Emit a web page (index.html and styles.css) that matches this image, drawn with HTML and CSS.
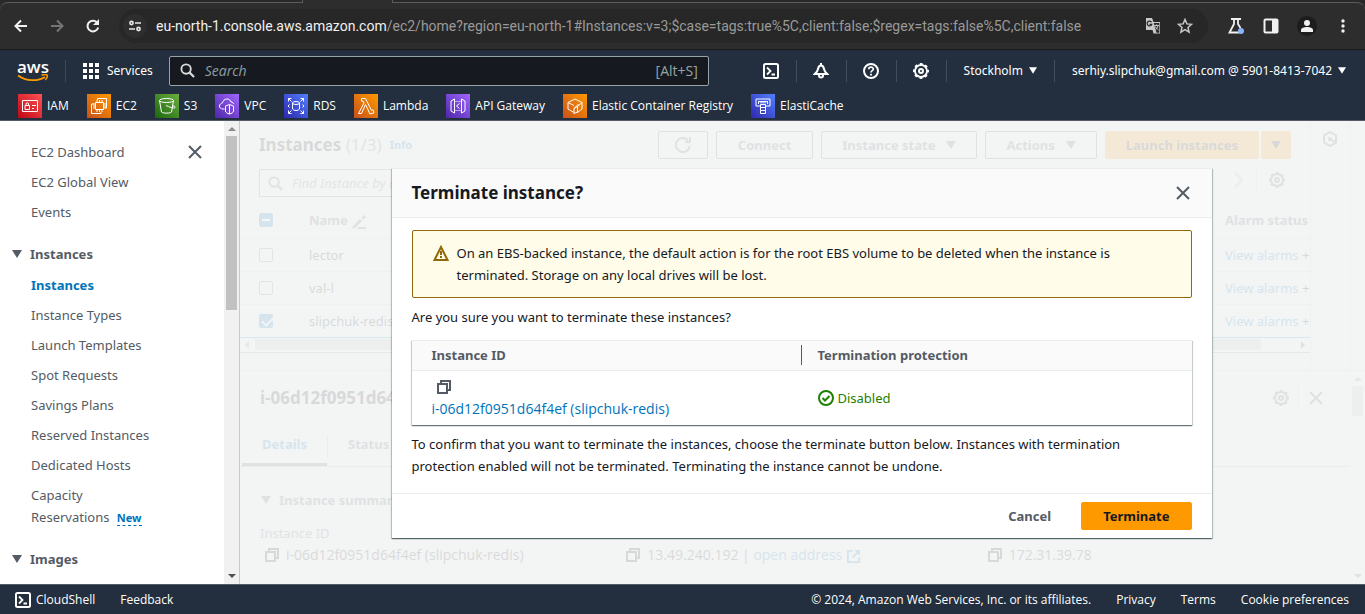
FILE: index.html
```html
<!DOCTYPE html>
<html lang="en">
<head>
<meta charset="utf-8">
<title>Instances | EC2 | eu-north-1</title>
<link rel="stylesheet" href="styles.css">
</head>
<body>
<svg class="sprite" aria-hidden="true">
  <symbol id="close" viewBox="0 0 16 16"><path d="M2 2l12 12M14 2L2 14" fill="none" stroke="currentColor" stroke-width="2"/></symbol>
  <symbol id="caret" viewBox="0 0 10 8"><path d="M0 0h10L5 8z" fill="currentColor"/></symbol>
  <symbol id="copy" viewBox="0 0 16 16"><path d="M2 5h9v9H2zM5 5V2h9v9h-3" fill="none" stroke="currentColor" stroke-width="2"/></symbol>
  <symbol id="search" viewBox="0 0 16 16"><circle cx="6.500" cy="6.500" r="5" fill="none" stroke="currentColor" stroke-width="2"/><path d="M10 10l5 5" stroke="currentColor" stroke-width="2.300"/></symbol>
  <symbol id="gear" viewBox="0 0 16 16"><circle cx="8" cy="8" r="7" fill="none" stroke="currentColor" stroke-width="2" stroke-dasharray="2.750 2.748" stroke-dashoffset="1.375"/><circle cx="8" cy="8" r="6" fill="none" stroke="currentColor" stroke-width="1.800"/><circle cx="8" cy="8" r="2" fill="none" stroke="currentColor" stroke-width="2"/></symbol>
  <symbol id="shell" viewBox="0 0 16 16"><rect x="1" y="1" width="14" height="14" rx="1.500" fill="none" stroke="currentColor" stroke-width="2"/><path d="M4 4.500L7.500 8 4 11.500M8.500 11.500H12" fill="none" stroke="currentColor" stroke-width="1.800"/></symbol>
  <symbol id="refresh" viewBox="0 0 16 16"><path d="M14.800 9A7 7 0 1 1 13 3.200" fill="none" stroke="currentColor" stroke-width="2"/><path d="M15 0v5h-5" fill="none" stroke="currentColor" stroke-width="2"/></symbol>
</svg>

<header class="browser">
  <div class="toolbar">
    <span class="tab-gap"></span>
    <button class="tool" aria-label="Back"><svg width="14" height="14" viewBox="0 0 14 14"><path d="M13 7H2M7 1.500L1.500 7 7 12.500" fill="none" stroke="currentColor" stroke-width="2"/></svg></button>
    <button class="tool tool-off" aria-label="Forward"><svg width="14" height="14" viewBox="0 0 14 14"><path d="M1 7h11M7 1.500L12.500 7 7 12.500" fill="none" stroke="currentColor" stroke-width="2"/></svg></button>
    <button class="tool" aria-label="Reload"><svg width="14" height="14" viewBox="0 0 14 14"><path d="M12.200 8.500A5.400 5.400 0 1 1 10.800 3.200L12 4.500" fill="none" stroke="currentColor" stroke-width="2"/><path d="M13 0v6H7z" fill="currentColor"/></svg></button>
    <div class="omnibox">
      <button class="site-info" aria-label="Site information"><svg width="12" height="12" viewBox="0 0 12 12"><g fill="none" stroke="currentColor" stroke-width="1.600"><circle cx="2.500" cy="3" r="1.600"/><path d="M6 3h6M0 9h6"/><circle cx="9.500" cy="9" r="1.600"/></g></svg></button>
      <p class="url"><span>eu-north-1.console.aws.amazon.com</span>/ec2/home?region=eu-north-1#Instances:v=3;$case=tags:true%5C,client:false;$regex=tags:false%5C,client:false</p>
      <button class="page-action" aria-label="Translate"><svg width="16" height="16" viewBox="0 0 16 16"><path d="M1 0h6l1.500 4h6.500v11.500H8.500L7.500 12H1z" fill="currentColor"/><path d="M8.800 5l2.700 9.800H14.300V5z" fill="#272727"/><path d="M6.600 4.200A2.400 2.400 0 1 0 6.800 6.300H4.500" fill="none" stroke="#272727" stroke-width="1.200"/><path d="M9.500 7.500h4.500M11.700 6.300v1.200M13 7.500c-.4 2-1.500 3.500-2.500 4.300M10.500 8.500c.5 1.300 1.700 2.700 3 3.500" fill="none" stroke="currentColor"/></svg></button>
      <button class="page-action" aria-label="Bookmark"><svg width="16" height="16" viewBox="0 0 16 16"><path d="M8 1.500l1.900 4.400 4.700.4-3.600 3.200 1.100 4.700L8 11.700l-4.100 2.500L5 9.500 1.400 6.300l4.700-.4z" fill="none" stroke="currentColor" stroke-width="1.500"/></svg></button>
    </div>
    <div class="extensions">
      <button class="tool" aria-label="Labs"><svg width="18" height="18" viewBox="0 0 18 18"><path d="M4 2h10M7 2v5L2.500 15.500h10M11 2v5l2.500 4" fill="none" stroke="currentColor" stroke-width="1.800"/><circle cx="14" cy="14" r="3" fill="#8ab4f8"/></svg></button>
      <button class="tool" aria-label="Side panel"><svg width="16" height="16" viewBox="0 0 16 16"><rect x="1.500" y="1.500" width="13" height="13" rx="1" fill="none" stroke="currentColor" stroke-width="2"/><path d="M9 1h6v14H9z" fill="currentColor"/></svg></button>
      <button class="tool" aria-label="Profile"><svg width="20" height="20" viewBox="0 0 20 20"><circle cx="10" cy="10" r="10" fill="#1d1d1d"/><circle cx="10" cy="7" r="3" fill="currentColor"/><path d="M4 16v-2c0-2 3-3 6-3s6 1 6 3v2z" fill="currentColor"/></svg></button>
      <button class="tool tool-menu" aria-label="Menu"><svg width="4" height="16" viewBox="0 0 4 16"><g fill="currentColor"><circle cx="2" cy="3" r="1.700"/><circle cx="2" cy="8" r="1.700"/><circle cx="2" cy="13" r="1.700"/></g></svg></button>
    </div>
  </div>
</header>

<nav class="console-nav" aria-label="Console">
  <div class="nav-main">
    <a class="logo" href="#"><span>aws</span><svg width="32" height="8" viewBox="0 0 32 8"><path d="M1 1.500C9 7.500 21 7.500 28 3" fill="none" stroke="#f90" stroke-width="1.700"/><path d="M24.500 1.200c2.500-.8 5-.8 5.700 0 .4 1-.4 3.200-1.800 4.800" fill="none" stroke="#f90" stroke-width="1.500"/></svg></a>
    <button class="services"><svg width="16" height="16" viewBox="0 0 16 16"><path d="M0 0h4v4H0zM6 0h4v4H6zM12 0h4v4h-4zM0 6h4v4H0zM6 6h4v4H6zM12 6h4v4h-4zM0 12h4v4H0zM6 12h4v4H6zM12 12h4v4h-4z" fill="currentColor"/></svg>Services</button>
    <label class="nav-search"><svg width="15" height="15"><use href="#search"/></svg><input type="text" placeholder="Search" aria-label="Search"><span>[Alt+S]</span></label>
    <div class="nav-tools">
      <button aria-label="CloudShell"><svg width="16" height="16"><use href="#shell"/></svg></button>
      <button aria-label="Notifications"><svg width="16" height="16" viewBox="0 0 16 16"><path d="M8 0v2.500M8 2.500C6 2.500 5.300 4 5 6c-.3 2.200-1.500 3.500-3.200 5h12.400C12.500 9.500 11.300 8.200 11 6c-.3-2-1-3.500-3-3.500zM6 11.500v1a2 2 0 0 0 4 0v-1" fill="none" stroke="currentColor" stroke-width="2"/></svg></button>
      <button aria-label="Help"><svg width="16" height="16" viewBox="0 0 16 16"><circle cx="8" cy="8" r="7" fill="none" stroke="currentColor" stroke-width="2"/><path d="M5.700 6.300C5.700 3.400 10.300 3.500 10.300 6c0 1.700-2.300 1.500-2.300 3.500" fill="none" stroke="currentColor" stroke-width="1.700"/><path d="M7.100 10.700h1.800v1.800H7.100z" fill="currentColor"/></svg></button>
      <button aria-label="Settings"><svg width="16" height="16"><use href="#gear"/></svg></button>
      <button class="region">Stockholm<svg width="8" height="7"><use href="#caret"/></svg></button>
      <button class="account">serhiy.slipchuk@gmail.com @ 5901-8413-7042<svg width="8" height="7"><use href="#caret"/></svg></button>
    </div>
  </div>
  <div class="favorites">
    <a href="#"><svg class="red" viewBox="0 0 24 24"><path d="M4.500 6.500h15v11h-15zM7 11.500h4.500v4H7zM8 11.500V10a1.200 1.200 0 0 1 2.500 0v1.500M14 11.500h4M14 14.500h2"/></svg>IAM</a>
    <a href="#"><svg class="orange" viewBox="0 0 24 24"><path d="M8.500 8.500h8v7h-8zM10 8V6M12.500 8V6M15 8V6M10 18v-2M12.500 18v-2M15 18v-2M8 10H6M8 12H6M8 14H6M19 10h-2M19 12h-2M19 14h-2M10.500 6V4.500h9V14H18M7 10H4.500v9.500H14V18"/></svg>EC2</a>
    <a href="#"><svg class="green" viewBox="0 0 24 24"><ellipse cx="11.500" cy="6.500" rx="7" ry="2"/><path d="M4.500 6.500L6.500 18c1 1.500 9 1.500 10 0l2-11.500M11 11.500c3 1.500 8 3.200 9 2.200s-1-1.700-3-2.200"/></svg>S3</a>
    <a href="#"><svg class="purple" viewBox="0 0 24 24"><path d="M9.500 15H8c-2.500 0-3.500-1.500-3.500-3S6 9 7.500 9C8 6.500 9.500 5 12 5s3.500 1.500 4 3c1.500 0 2.500 1 2.500 2M14.500 10.500l4 1.500v5c0 1.500-2 2.500-4 3-2-.500-4-1.500-4-3v-5zM14.500 11v9"/></svg>VPC</a>
    <a href="#"><svg class="blue" viewBox="0 0 24 24"><ellipse cx="12" cy="9" rx="3.500" ry="1.500"/><path d="M8.500 9v6c1 2 6 2 7 0V9M4.500 7.500v-3h3M4.500 4.500l3 3M16.500 4.500h3v3M19.500 4.500l-3 3M4.500 16.500v3h3M4.500 19.500l3-3M16.500 19.500h3v-3M19.500 19.500l-3-3M5.500 10.500L4 12l1.500 1.500M18.500 10.500L20 12l-1.500 1.500"/></svg>RDS</a>
    <a href="#"><svg class="orange" viewBox="0 0 24 24"><path d="M7.500 4.500h4l6 12 1.500-.700 1 3-4 1.200-4.500-9.500L7.500 19.500h-3L10 9 9 7H7.500z"/></svg>Lambda</a>
    <a href="#"><svg class="purple" viewBox="0 0 24 24"><path d="M8.500 5v14L5 17V7zM15.500 5v14l3.500-2V7zM13.500 9.500L10.500 12l3 2.500"/><path d="M8.500 7.500h7M8.500 16.500h7" stroke-dasharray="1 1"/></svg>API Gateway</a>
    <a href="#"><svg class="orange" viewBox="0 0 24 24"><path d="M11 18.500l-6-3.500V8.500L12 5l7 3.500v6.500l-4.500 3.500v-6l4.500-4M5 8.500l6 3M14.500 12.500l-3.500 2v5l3.500-1.500M11 14.500l4.500-4.500"/></svg>Elastic Container Registry</a>
    <a href="#"><svg class="blue" viewBox="0 0 24 24"><path d="M9 12H5V5h14v7h-4M7.500 10V7.500h9V10M10 7.500v2M12 7.500v2M14 7.500v2M9.500 10.500h5v3h-5zM9.500 13.500h5v3h-5zM9.500 16.500h5v3h-5z"/></svg>ElastiCache</a>
  </div>
</nav>

<div class="workspace">
  <aside class="sidebar">
    <nav class="side-nav" aria-label="EC2">
      <button class="side-close" aria-label="Close navigation"><svg width="16" height="16"><use href="#close"/></svg></button>
      <ul>
        <li><a href="#">EC2 Dashboard</a></li>
        <li><a href="#">EC2 Global View</a></li>
        <li><a href="#">Events</a></li>
      </ul>
      <h2><svg width="10" height="8"><use href="#caret"/></svg>Instances</h2>
      <ul>
        <li><a class="current" href="#">Instances</a></li>
        <li><a href="#">Instance Types</a></li>
        <li><a href="#">Launch Templates</a></li>
        <li><a href="#">Spot Requests</a></li>
        <li><a href="#">Savings Plans</a></li>
        <li><a href="#">Reserved Instances</a></li>
        <li><a href="#">Dedicated Hosts</a></li>
        <li><a href="#">Capacity<br>Reservations</a> <a class="new" href="#">New</a></li>
      </ul>
      <h2><svg width="10" height="8"><use href="#caret"/></svg>Images</h2>
    </nav>
    <div class="scrollbar"><i class="up"></i><i class="thumb"></i><i class="down"></i></div>
  </aside>

  <main class="stage">
    <div class="page">
      <section class="instances">
        <div class="page-head">
          <h1>Instances <span>(1/3)</span></h1><a class="info" href="#">Info</a>
          <div class="actions">
            <button class="btn btn-icon" aria-label="Refresh"><svg width="16" height="16"><use href="#refresh"/></svg></button>
            <button class="btn btn-wide">Connect</button>
            <button class="btn">Instance state<svg width="10" height="8"><use href="#caret"/></svg></button>
            <button class="btn">Actions<svg width="10" height="8"><use href="#caret"/></svg></button>
            <div class="split"><button class="btn primary">Launch instances</button><button class="btn primary btn-caret" aria-label="More launch options"><svg width="10" height="8"><use href="#caret"/></svg></button></div>
          </div>
        </div>
        <div class="filter">
          <label class="find"><svg width="15" height="15"><use href="#search"/></svg><input type="text" placeholder="Find Instance by attribute or tag" aria-label="Find instance"></label>
          <div class="pager">
            <svg width="10" height="16" viewBox="0 0 10 16"><path d="M1 1l7 7-7 7" fill="none" stroke="#aab7b8" stroke-width="2"/></svg>
            <i></i>
            <svg width="16" height="16"><use href="#gear"/></svg>
          </div>
        </div>
        <table class="list">
          <thead><tr><th class="pick"><input type="checkbox" class="mixed" aria-label="Select all"></th><th>Name <svg width="16" height="16" viewBox="0 0 16 16"><path d="M1 15l1.500-3.500L9 5l2 2-6.500 6.500zM10.500 3.500L13 1l2 2-2.500 2.500z" fill="currentColor"/><path d="M7 14h8" stroke="currentColor" stroke-width="2"/></svg></th><th class="alarm">Alarm status</th></tr></thead>
          <tbody>
            <tr><td class="pick"><input type="checkbox" aria-label="lector"></td><td>lector</td><td class="alarm"><a href="#">View alarms</a> +</td></tr>
            <tr><td class="pick"><input type="checkbox" aria-label="val-l"></td><td>val-l</td><td class="alarm"><a href="#">View alarms</a> +</td></tr>
            <tr class="picked"><td class="pick"><input type="checkbox" checked aria-label="slipchuk-redis"></td><td>slipchuk-redis</td><td class="alarm"><a href="#">View alarms</a> +</td></tr>
          </tbody>
        </table>
        <div class="hscroll"><i class="left"></i><i class="track"></i><i class="right"></i></div>
      </section>
      <div class="tool-strip"><svg width="16" height="16" viewBox="0 0 16 16"><path d="M8 1l6 3.500v7L8 15l-6-3.500v-7z" fill="none" stroke="currentColor" stroke-width="2"/><circle cx="8" cy="8" r="2" fill="currentColor"/><path d="M8 8l5 3" stroke="currentColor" stroke-width="2"/></svg></div>
      <section class="panel">
        <div class="panel-body">
          <div class="panel-head"><h2>i-06d12f0951d64f4ef (slipchuk-redis)</h2>
            <div class="panel-tools"><svg width="16" height="16"><use href="#gear"/></svg><i></i><svg width="16" height="16"><use href="#close"/></svg></div>
          </div>
          <div class="tabs"><button class="on">Details</button><i></i><button>Status and alarms</button></div>
          <h3><svg width="10" height="8"><use href="#caret"/></svg>Instance summary</h3>
          <div class="facts">
            <div><p class="label">Instance ID</p><p class="value"><svg width="16" height="16"><use href="#copy"/></svg>i-06d12f0951d64f4ef (slipchuk-redis)</p></div>
            <div><p class="label">Public IPv4 address</p><p class="value"><svg width="16" height="16"><use href="#copy"/></svg><span>13.49.240.192 | <a href="#">open address <svg width="15" height="15" viewBox="0 0 16 16"><path d="M7 2H2v12h12V9M10 2h4v4M14 2L7 9" fill="none" stroke="currentColor" stroke-width="2"/></svg></a></span></p></div>
            <div><p class="label">Private IPv4 addresses</p><p class="value"><svg width="16" height="16"><use href="#copy"/></svg>172.31.39.78</p></div>
          </div>
        </div>
        <div class="scrollbar"><i class="up"></i><i class="thumb"></i><i class="down"></i></div>
      </section>
    </div>

    <div class="overlay">
      <div class="modal" role="dialog" aria-modal="true" aria-labelledby="modal-title">
        <div class="modal-head"><h2 id="modal-title">Terminate instance?</h2><button class="modal-close" aria-label="Close"><svg width="16" height="16"><use href="#close"/></svg></button></div>
        <div class="modal-body">
          <div class="alert"><svg width="16" height="16" viewBox="0 0 16 16"><path d="M8 2L1.500 15h13z" fill="none" stroke="currentColor" stroke-width="2"/><path d="M8 6v4M8 11v2" stroke="currentColor" stroke-width="2"/></svg><p>On an EBS-backed instance, the default action is for the root EBS volume to be deleted when the instance is terminated. Storage on any local drives will be lost.</p></div>
          <p>Are you sure you want to terminate these instances?</p>
          <table class="targets">
            <thead><tr><th><span>Instance ID</span></th><th>Termination protection</th></tr></thead>
            <tbody><tr><td><button class="copy" aria-label="Copy instance ID"><svg width="16" height="16"><use href="#copy"/></svg></button><a class="resource" href="#">i-06d12f0951d64f4ef (slipchuk-redis)</a></td><td><span class="status"><svg width="16" height="16" viewBox="0 0 16 16"><circle cx="8" cy="8" r="7" fill="none" stroke="currentColor" stroke-width="2"/><path d="M4.500 8L7 10.500l4.500-4.500" fill="none" stroke="currentColor" stroke-width="2"/></svg>Disabled</span></td></tr></tbody>
          </table>
          <p class="notice">To confirm that you want to terminate the instances, choose the terminate button below. Instances with termination protection enabled will not be terminated. Terminating the instance cannot be undone.</p>
        </div>
        <div class="modal-foot"><button class="btn btn-wide link">Cancel</button><button class="btn btn-wide primary">Terminate</button></div>
      </div>
    </div>
  </main>
</div>

<footer class="console-foot">
  <a href="#"><svg width="16" height="16"><use href="#shell"/></svg>CloudShell</a>
  <a href="#">Feedback</a>
  <p>© 2024, Amazon Web Services, Inc. or its affiliates.</p>
  <a href="#">Privacy</a>
  <a href="#">Terms</a>
  <a href="#">Cookie preferences</a>
</footer>
</body>
</html>
```

FILE: styles.css
```css
* { box-sizing: border-box; }
html, body { height: 100%; }
body {
  margin: 0;
  display: flex;
  flex-direction: column;
  min-height: 100vh;
  overflow: hidden;
  background: #fff;
  color: #16191f;
  font: 13px/22px "Noto Sans", "Open Sans", sans-serif;
}
h1, h2, h3, p, ul { margin: 0; padding: 0; }
h1, h2, h3, th { font-size: 13px; font-weight: 700; line-height: 22px; }
ul { list-style: none; }
button { font: inherit; color: inherit; background: none; border: 0; padding: 0; cursor: pointer; }
input { font: inherit; }
a { color: #0073bb; text-decoration: none; }
svg { flex: none; }
.sprite { position: absolute; width: 0; height: 0; }

/* Browser chrome */
.browser { padding-top: 2px; background: #292929; border-bottom: 1px solid #1a1a1a; }
.toolbar {
  position: relative;
  display: flex;
  align-items: center;
  height: 47px;
  padding: 0 20px 0 14px;
  background: #2d2d2d;
  border-top: 1px solid #5c5c5c;
  border-radius: 8px 8px 0 0;
}
.tab-gap {
  position: absolute;
  top: -3px;
  left: 302px;
  width: 91px;
  height: 3px;
  background: #2d2d2d;
  border: solid #5c5c5c;
  border-width: 0 1px;
}
.tool { display: flex; color: #f1f1f1; }
.toolbar > .tool { margin-right: 22px; }
.tool-off.tool { color: #757575; }
.omnibox {
  flex: 1;
  display: flex;
  align-items: center;
  height: 34px;
  min-width: 0;
  padding: 0 15px 0 4px;
  background: #272727;
  border-radius: 17px;
}
.toolbar > .omnibox { margin-left: -3px; }
.site-info { display: grid; place-items: center; width: 24px; height: 24px; margin-right: 9px; border-radius: 12px; background: #2e2e2e; color: #e8e8e8; }
.url { flex: 1; min-width: 0; overflow: hidden; white-space: nowrap; color: #9a9a9a; font: 14px/20px Roboto, sans-serif; }
.url span { color: #f1f1f1; }
.page-action { display: flex; margin-left: 16px; color: #c8c8c8; }
.extensions { display: flex; align-items: center; gap: 18px; margin-left: 19px; }
.tool-menu { margin-left: 6px; }

/* Console navigation */
.console-nav { background: #232f3e; color: #fff; border-bottom: 1px solid #545b64; font-size: 12px; }
.nav-main { display: flex; align-items: center; height: 41px; padding-right: 19px; }
.logo { display: flex; flex-direction: column; align-items: center; margin-left: 17px; color: #fff; font: 600 17px/15px "Open Sans", sans-serif; }
.services { display: flex; align-items: center; gap: 8px; margin-left: 16px; padding-left: 17px; border-left: 1px solid #3f4a55; height: 22px; }
.nav-search {
  flex: 0 1 540px;
  display: flex;
  align-items: center;
  gap: 10px;
  height: 30px;
  margin-left: 16px;
  padding: 0 10px;
  background: #161a20;
  border: 1px solid #95a5a6;
  border-radius: 2px;
  color: #d5dbdb;
}
.nav-search input { flex: 1; min-width: 0; padding: 0; border: 0; background: none; color: #fff; font: 14px "Open Sans", sans-serif; }
.nav-search input::placeholder { color: #8f9ea0; font-style: italic; opacity: 1; }
.nav-search span { color: #95a5a6; font: 14px "Open Sans", sans-serif; }
.nav-tools { display: flex; align-items: center; margin-left: auto; }
.nav-tools button { display: flex; align-items: center; height: 22px; padding: 0 17px 0 16px; gap: 6px; border-left: 1px solid #414d5c; white-space: nowrap; }
.nav-tools button:first-child { border-left: 0; }
.nav-tools .region { padding-left: 17px; }
.nav-tools .account { padding: 0 0 0 17px; }
.favorites { display: flex; align-items: center; gap: 18px; height: 29px; padding: 0 18px; font-family: "Open Sans", sans-serif; }
.favorites a { display: flex; align-items: center; gap: 5px; color: #fff; white-space: nowrap; }
.favorites svg { width: 24px; height: 24px; fill: none; stroke: #fff; stroke-width: 1; }
.red { background: linear-gradient(45deg, #bd0816, #ff5252); }
.orange { background: linear-gradient(45deg, #c8511b, #f90); }
.green { background: linear-gradient(45deg, #1b660f, #6cae3e); }
.purple { background: linear-gradient(45deg, #4d27a8, #a166ff); }
.blue { background: linear-gradient(45deg, #2e27ad, #527fff); }

/* Workspace */
.workspace { flex: 1; display: flex; min-height: 0; }
.sidebar { display: flex; width: 240px; flex: none; border-right: 1px solid #c6cacb; overflow: hidden; }
.side-nav { flex: 1; position: relative; padding: 20px 0 0 31px; color: #545b64; overflow: hidden; }
.side-close { position: absolute; top: 23px; right: 21px; display: flex; }
.side-nav li + li { margin-top: 8px; }
.side-nav a { color: #545b64; }
.side-nav h2 { display: flex; align-items: center; gap: 8px; margin: 20px 0 9px -19px; }
.side-nav a.current { color: #0073bb; font-weight: 700; }
.side-nav a.new { margin-left: 4px; color: #0073bb; font-size: 11px; font-weight: 700; line-height: 16px; border-bottom: 1px dashed #0073bb; }
.scrollbar { display: flex; flex-direction: column; align-items: center; width: 15px; flex: none; padding: 6px 0; background: #f1f1f1; }
.scrollbar i, .hscroll i { border: 4px solid transparent; }
.scrollbar .up { border-top: 0; border-bottom-color: #8a8a8a; }
.scrollbar .thumb { width: 11px; height: 174px; margin: 5px 0 auto; border: 0; background: #c1c1c1; }
.scrollbar .down { border-bottom: 0; border-top-color: #505050; }

.stage { position: relative; flex: 1; min-width: 0; overflow: hidden; background: #f2f3f3; }
.page { height: 100%; display: grid; grid-template: 249px 1fr / 1fr 41px 14px; }
.instances { min-width: 0; overflow: hidden; padding-top: 10px; }
.page-head { display: flex; align-items: center; padding: 0 19px; white-space: nowrap; }
.page-head h1 { font-size: 17px; line-height: 28px; }
.page-head h1 span { font-weight: 400; color: #687078; }
.info { margin-left: 8px; font-size: 11px; font-weight: 700; }
.actions { display: flex; gap: 8px; margin-left: auto; }
.btn { display: flex; align-items: center; justify-content: center; gap: 11px; height: 28px; padding: 0 20px; border: 1px solid #545b64; border-radius: 2px; color: #545b64; font-weight: 700; white-space: nowrap; }
.btn-wide { padding: 0 21px; }
.btn-icon { width: 50px; }
.split { display: flex; gap: 2px; }
.btn.primary { background: #f90; border-color: #f90; color: #16191f; }
.btn-caret.btn { width: 30px; padding: 0; }
.btn.link { border-color: transparent; }
.filter { display: flex; align-items: flex-start; margin: 10px 0 6px; padding: 0 25px 0 19px; }
.find { display: flex; align-items: center; gap: 9px; width: 540px; height: 28px; padding: 0 8px; border: 1px solid #687078; color: #545b64; }
.find input { flex: 1; border: 0; padding: 0; background: none; }
.find input::placeholder { font-style: italic; color: #687078; opacity: 1; }
.pager, .panel-tools { display: flex; align-items: center; gap: 12px; height: 22px; margin-left: auto; color: #545b64; }
.pager i, .panel-tools i { width: 1px; height: 26px; background: #d5dbdb; }
.list { width: 100%; table-layout: fixed; border-collapse: collapse; color: #16191f; }
.list tr { height: 33px; }
.list thead tr { height: 35px; }
.list th, .list td { padding: 0 0 0 19px; text-align: left; white-space: nowrap; overflow: hidden; border-bottom: 1px solid #d5dbdb; }
.list th { color: #545b64; }
.list th svg { vertical-align: middle; }
.list .pick { width: 50px; line-height: 0; }
.list .alarm { width: 85px; padding: 0; }
.list .picked td { background: #f1faff; border: solid #00a1c9; border-width: 1px 0; }
.list input { appearance: none; width: 14px; height: 14px; margin: 0; border: 1px solid #687078; border-radius: 2px; }
.list input:checked, .list input.mixed { border: 0; background: #0073bb; }
.list input.mixed::after { content: ""; display: block; width: 8px; height: 2px; margin: 6px 3px; background: #fff; }
.list input:checked::after { content: ""; display: block; width: 5px; height: 9px; margin: 1px 5px; border: solid #fff; border-width: 0 2px 2px 0; transform: rotate(45deg); }
.hscroll { display: flex; align-items: center; height: 15px; padding: 0 5px; border-bottom: 1px solid #879596; }
.hscroll .left { border-left: 0; border-right-color: #8a8a8a; }
.hscroll .track { flex: 1; height: 11px; margin: 0 40px 0 6px; border: 0; background: #c1c1c1; }
.hscroll .right { border-right: 0; border-left-color: #505050; }
.tool-strip { grid-column: 2; padding: 10px 0 0 11px; border: solid #d5dbdb; border-width: 0 1px; color: #545b64; }
.panel { grid-column: 1 / -1; display: flex; min-height: 0; overflow: hidden; border-top: 1px solid #d5dbdb; }
.panel-body { flex: 1; min-width: 0; }
.panel-head { display: flex; align-items: center; padding: 16px 26px 16px 20px; }
.panel-head h2 { font-size: 17px; color: #16191f; }
.panel-tools { gap: 9px; }
.tabs { display: flex; align-items: center; height: 42px; padding-left: 2px; border-bottom: 1px solid #aab7b8; }
.tabs button { height: 41px; padding: 0 20px; color: #545b64; font-weight: 700; border-bottom: 3px solid transparent; }
.tabs button.on { color: #0073bb; border-color: #545b64; }
.tabs i { width: 1px; height: 22px; background: #aab7b8; }
.panel h3 { display: flex; align-items: center; gap: 8px; margin: 22px 0 11px 21px; color: #545b64; }
.facts { display: grid; grid-template-columns: repeat(3, 1fr); padding: 0 6px 0 20px; white-space: nowrap; }
.facts p { display: flex; align-items: center; gap: 6px; }
.facts .label { color: #545b64; }
.facts .value { padding-left: 4px; font-size: 14px; font-family: "Open Sans", sans-serif; }
.facts a svg { vertical-align: middle; }
.panel .scrollbar .thumb { height: 30px; }

/* Modal */
.overlay { position: absolute; inset: 0; display: flex; align-items: center; justify-content: center; padding-right: 2px; background: rgba(242, 244, 244, .88); }
.modal {
  width: 820px;
  max-width: 100%;
  background: #fff;
  border-top: 1px solid #eaeded;
  box-shadow: 0 1px 1px 0 rgba(0, 28, 36, .45), 1px 1px 1px 0 rgba(0, 28, 36, .2), -1px 1px 1px 0 rgba(0, 28, 36, .2);
}
.modal-head { display: flex; align-items: center; justify-content: space-between; height: 49px; padding: 0 21px 0 20px; background: #fafafa; border-bottom: 1px solid #eaeded; }
.modal-head h2 { font-size: 17px; }
.modal-close { display: flex; color: #545b64; }
.modal-body { padding: 12px 20px 16px; }
.alert { display: flex; gap: 8px; margin-bottom: 8px; padding: 11px 40px 11px 20px; background: #fffce9; border: 1px solid #906806; border-radius: 2px; }
.alert svg { margin-top: 3px; color: #906806; }
.targets { width: 100%; margin: 12px 0 8px; table-layout: fixed; border-collapse: collapse; border-top: 1px solid #eaeded; box-shadow: 0 1px 1px 0 rgba(0, 28, 36, .45), 1px 1px 1px 0 rgba(0, 28, 36, .15), -1px 1px 1px 0 rgba(0, 28, 36, .15); }
.targets th { height: 30px; padding: 0 0 0 16px; background: #fafafa; border-bottom: 1px solid #eaeded; color: #545b64; text-align: left; }
.targets th:first-child, .targets td:first-child { padding-left: 20px; }
.targets th:first-child span { display: block; line-height: 20px; border-right: 1px solid #545b64; }
.targets td { padding: 5px 0 5px 16px; }
.copy { display: flex; align-items: center; height: 22px; margin-left: 4px; color: #545b64; }
.resource { font-size: 14px; font-family: "Open Sans", sans-serif; }
.notice { padding-right: 24px; }
.status { display: flex; align-items: center; gap: 4px; color: #1d8102; }
.modal-foot { display: flex; justify-content: flex-end; padding: 8px 20px; border-top: 1px solid #eaeded; gap: 8px; }

/* Footer */
.console-foot { display: flex; align-items: center; gap: 25px; height: 30px; flex: none; padding: 0 16px 0 15px; background: #232f3e; border-top: 1px solid #545b64; color: #fff; font: 12px/22px "Open Sans", sans-serif; white-space: nowrap; }
.console-foot a { display: flex; align-items: center; gap: 5px; color: #fff; }
.console-foot p { margin-left: auto; }
```
